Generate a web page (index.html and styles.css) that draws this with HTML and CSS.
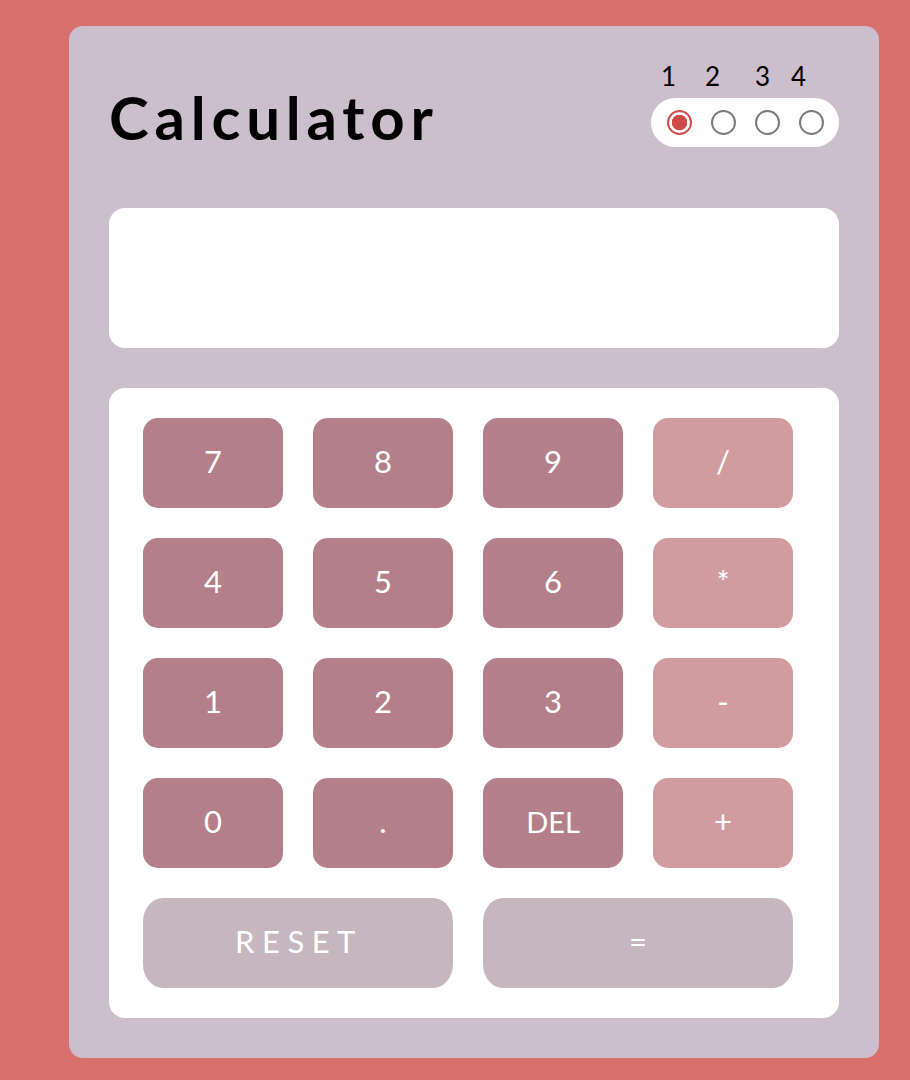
FILE: index.html
```html
<!DOCTYPE html>
<html>
<head>
<meta charset="utf-8">
<link rel="stylesheet" href="styles.css">
</head>
<body>
<main class="calc">
  <header class="head">
    <h1 class="title">Calculator</h1>
    <div class="theme">
      <div class="nums"><span>1</span><span>2</span><span>3</span><span>4</span></div>
      <div class="pill">
        <span class="radio on"></span>
        <span class="radio"></span>
        <span class="radio"></span>
        <span class="radio"></span>
      </div>
    </div>
  </header>
  <div class="screen"></div>
  <div class="pad">
    <button class="key num">7</button>
    <button class="key num">8</button>
    <button class="key num">9</button>
    <button class="key op">/</button>
    <button class="key num">4</button>
    <button class="key num">5</button>
    <button class="key num">6</button>
    <button class="key op">*</button>
    <button class="key num">1</button>
    <button class="key num">2</button>
    <button class="key num">3</button>
    <button class="key op">-</button>
    <button class="key num">0</button>
    <button class="key num">.</button>
    <button class="key num del">DEL</button>
    <button class="key op">+</button>
    <button class="key wide reset">RESET</button>
    <button class="key wide">=</button>
  </div>
</main>
</body>
</html>
```
FILE: styles.css
```css
html, body { margin: 0; padding: 0; }
body {
  background: #d8716b;
  font-family: "Lato", "Open Sans", sans-serif;
  padding: 26px 0 0 69px;
  height: 1080px;
  box-sizing: border-box;
}
.calc {
  width: 810px;
  height: 1032px;
  box-sizing: border-box;
  background: #cdbecd;
  border-radius: 14px;
  padding: 34px 40px 40px 40px;
}
.head {
  display: flex;
  justify-content: space-between;
  align-items: flex-start;
  height: 148px;
}
.title {
  margin: 0;
  margin-top: 17px;
  font-size: 60px;
  font-weight: 700;
  letter-spacing: 5.8px;
  line-height: 80px;
  color: #000;
}
.theme {
  display: flex;
  flex-direction: column;
  align-items: flex-end;
}
.nums {
  display: flex;
  font-size: 26px;
  line-height: 32px;
  color: #000;
  width: 188px;
  padding-left: 10px;
  box-sizing: border-box;
  height: 38px;
}
.nums span { display: inline-block; }
.nums span:nth-child(1) { width: 44px; }
.nums span:nth-child(2) { width: 50px; }
.nums span:nth-child(3) { width: 36px; }
.pill {
  width: 188px;
  height: 49px;
  background: #fff;
  border-radius: 25px;
  display: flex;
  align-items: center;
  gap: 19px;
  padding-left: 16px;
  box-sizing: border-box;
}
.radio {
  width: 25px;
  height: 25px;
  border-radius: 50%;
  border: 2px solid #7a7a7a;
  box-sizing: border-box;
  display: inline-block;
}
.radio.on {
  border-color: #d24a4a;
  background: radial-gradient(circle, #d04848 0 7.5px, #fff 8px);
}
.screen {
  height: 140px;
  background: #fff;
  border-radius: 16px;
  margin-bottom: 40px;
}
.pad {
  height: 630px;
  box-sizing: border-box;
  background: #fff;
  border-radius: 16px;
  padding: 30px 34px;
  display: grid;
  grid-template-columns: repeat(4, 140px);
  grid-auto-rows: 90px;
  gap: 30px;
}
.key {
  border: none;
  border-radius: 15px;
  color: #fff;
  font-family: "Lato", sans-serif;
  font-size: 31px;
  font-weight: 400;
  padding: 0 0 4px 0;
}
.num { background: #b3808a; }
.op { background: #d09ca0; }
.del { font-size: 29px; }
.wide {
  grid-column: span 2;
  background: #c6b6bd;
  border-radius: 20px / 24px;
}
.reset { letter-spacing: 7.5px; padding-left: 2px; }
```
